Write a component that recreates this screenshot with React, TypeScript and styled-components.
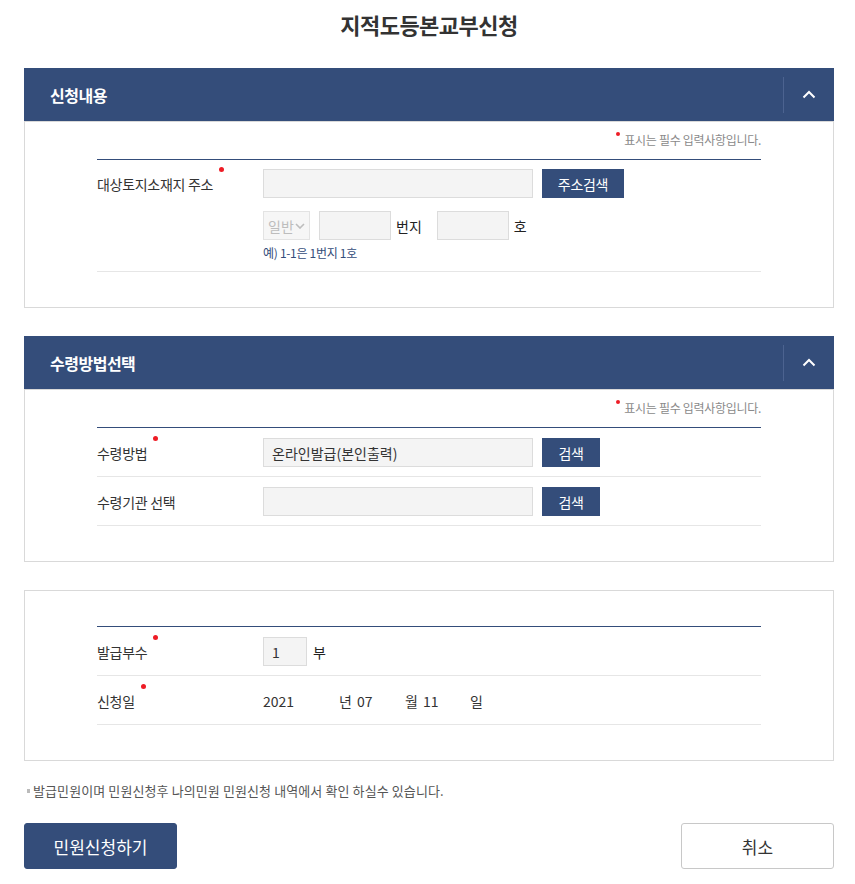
import styled, { createGlobalStyle } from 'styled-components';

const NAVY = '#344d7a';

const GlobalStyle = createGlobalStyle`
  body {
    margin: 0;
    background: #fff;
    font-family: "Noto Sans CJK KR", "Noto Sans", sans-serif;
    color: #333;
  }
`;

const Page = styled.div`
  width: 810px;
  margin-left: 24px;
  padding-bottom: 15px;
`;

const Title = styled.h1`
  margin: 12px 0 0;
  height: 56px;
  font-size: 22px;
  line-height: 24px;
  font-weight: 700;
  text-align: center;
  color: #333;
  letter-spacing: -0.5px;
`;

const Section = styled.section`
  & + & {
    margin-top: 28px;
  }
`;

const SectionHeader = styled.div`
  display: flex;
  align-items: center;
  height: 53px;
  background: ${NAVY};
  padding-left: 26px;
`;

const SectionTitle = styled.h2`
  flex: 1;
  margin: 0;
  font-size: 16px;
  font-weight: 700;
  color: #fff;
  letter-spacing: -0.5px;
`;

const ToggleButton = styled.button`
  display: flex;
  align-items: center;
  justify-content: center;
  width: 51px;
  height: 36px;
  padding: 0;
  border: 0;
  border-left: 1px solid #4c6390;
  background: transparent;
  cursor: pointer;
`;

const SectionBody = styled.div<{ $top: number }>`
  border: 1px solid #d9d9d9;
  padding: ${(p) => p.$top}px 72px 35px;
`;

const RequiredNote = styled.p`
  display: flex;
  justify-content: flex-end;
  align-items: flex-start;
  margin: 0 0 9px;
  height: 20px;
  font-size: 12px;
  line-height: 20px;
  color: #8a8a8a;
  letter-spacing: -0.3px;
`;

const Dot = styled.span<{ $size?: number; $lift?: number }>`
  display: inline-block;
  flex: none;
  width: ${(p) => p.$size ?? 5}px;
  height: ${(p) => p.$size ?? 5}px;
  border-radius: 50%;
  background: #ee1c25;
  margin-top: ${(p) => -(p.$lift ?? 0)}px;
  margin-right: 4px;
`;

const FormTable = styled.div`
  border-top: 1px solid ${NAVY};
`;

const Row = styled.div<{ $top?: number }>`
  display: flex;
  align-items: flex-start;
  padding: ${(p) => p.$top ?? 10}px 0 9px;
  border-bottom: 1px solid #e6e6e6;
`;

const LabelCell = styled.div`
  display: flex;
  align-items: center;
  width: 166px;
  height: 29px;
  flex: none;
`;

const Label = styled.span`
  display: inline-flex;
  align-items: flex-start;
  font-size: 14px;
  line-height: 20px;
  color: #333;
  letter-spacing: -0.3px;

  ${Dot} {
    margin: -7px 0 0 6px;
  }
`;

const FieldCell = styled.div`
  display: flex;
  flex-direction: column;
`;

const FieldLine = styled.div<{ $gap?: number }>`
  display: flex;
  align-items: center;
  gap: ${(p) => p.$gap ?? 9}px;
  & + & {
    margin-top: 13px;
  }
`;

const TextBox = styled.input<{ $w: number }>`
  box-sizing: border-box;
  width: ${(p) => p.$w}px;
  height: 29px;
  padding: 0 8px;
  border: 1px solid #dcdcdc;
  background: #f4f4f4;
  font-family: inherit;
  font-size: 14px;
  color: #333;
  outline: none;
`;

const FakeSelect = styled.div`
  box-sizing: border-box;
  display: flex;
  align-items: center;
  justify-content: space-between;
  width: 47px;
  height: 29px;
  padding: 0 4px;
  border: 1px solid #e3e3e3;
  background: #f6f6f6;
  font-size: 14px;
  color: #bdbdbd;
`;

const SearchButton = styled.button<{ $w: number }>`
  width: ${(p) => p.$w}px;
  height: 29px;
  padding: 0;
  border: 0;
  background: ${NAVY};
  color: #fff;
  font-family: inherit;
  font-size: 14px;
  letter-spacing: -0.3px;
  cursor: pointer;
`;

const Unit = styled.span<{ $ml?: number; $mr?: number }>`
  font-size: 14px;
  color: #222;
  margin-left: ${(p) => p.$ml ?? -4}px;
  margin-right: ${(p) => p.$mr ?? 0}px;
`;

const Example = styled.div`
  margin-top: 4px;
  font-size: 12px;
  line-height: 18px;
  color: ${NAVY};
  letter-spacing: -0.3px;
`;

const DateLine = styled.div`
  display: flex;
  align-items: center;
  height: 29px;
`;

const DateText = styled.span<{ $w: number }>`
  display: inline-block;
  width: ${(p) => p.$w}px;
  font-size: 14px;
  color: #333;
`;

const Footnote = styled.p`
  display: flex;
  align-items: center;
  margin: 21px 0 0 3px;
  font-size: 13px;
  line-height: 18px;
  color: #555;
  letter-spacing: 0.1px;

  &::before {
    content: '';
    width: 3px;
    height: 4px;
    background: #bbb;
    margin-right: 3px;
  }
`;

const ButtonBar = styled.div`
  display: flex;
  justify-content: space-between;
  margin-top: 23px;
`;

const ActionButton = styled.button<{ $primary?: boolean }>`
  width: 153px;
  height: 46px;
  border-radius: 3px;
  border: 1px solid ${(p) => (p.$primary ? NAVY : '#c8c8c8')};
  background: ${(p) => (p.$primary ? NAVY : '#fff')};
  color: ${(p) => (p.$primary ? '#fff' : '#333')};
  font-family: inherit;
  font-size: 17px;
  cursor: pointer;
`;

function ChevronUp() {
  return (
    <svg width="14" height="9" viewBox="0 0 14 9" fill="none">
      <path d="M1.5 7.5L7 2l5.5 5.5" stroke="#fff" strokeWidth="2" />
    </svg>
  );
}

function ChevronDown() {
  return (
    <svg width="10" height="6" viewBox="0 0 10 6" fill="none">
      <path d="M1 1l4 4 4-4" stroke="#bdbdbd" strokeWidth="1.6" />
    </svg>
  );
}

function Note() {
  return (
    <RequiredNote>
      <Dot $size={4} $lift={-2} />
      표시는 필수 입력사항입니다.
    </RequiredNote>
  );
}

function RequiredLabel({ text, required = true }: { text: string; required?: boolean }) {
  return (
    <LabelCell>
      <Label>
        {text}
        {required && <Dot />}
      </Label>
    </LabelCell>
  );
}

function Header({ title }: { title: string }) {
  return (
    <SectionHeader>
      <SectionTitle>{title}</SectionTitle>
      <ToggleButton aria-label="접기">
        <ChevronUp />
      </ToggleButton>
    </SectionHeader>
  );
}

export default function App() {
  return (
    <>
      <GlobalStyle />
      <Page>
        <Title>지적도등본교부신청</Title>

        <Section>
          <Header title="신청내용" />
          <SectionBody $top={8}>
            <Note />
            <FormTable>
              <Row $top={9}>
                <RequiredLabel text="대상토지소재지 주소" />
                <FieldCell>
                  <FieldLine>
                    <TextBox $w={270} readOnly />
                    <SearchButton $w={82}>주소검색</SearchButton>
                  </FieldLine>
                  <FieldLine>
                    <FakeSelect>
                      일반
                      <ChevronDown />
                    </FakeSelect>
                    <TextBox $w={72} />
                    <Unit $mr={6}>번지</Unit>
                    <TextBox $w={72} />
                    <Unit>호</Unit>
                  </FieldLine>
                  <Example>예) 1-1은 1번지 1호</Example>
                </FieldCell>
              </Row>
            </FormTable>
          </SectionBody>
        </Section>

        <Section>
          <Header title="수령방법선택" />
          <SectionBody $top={8}>
            <Note />
            <FormTable>
              <Row>
                <RequiredLabel text="수령방법" />
                <FieldLine>
                  <TextBox $w={270} readOnly value="온라인발급(본인출력)" />
                  <SearchButton $w={58}>검색</SearchButton>
                </FieldLine>
              </Row>
              <Row>
                <RequiredLabel text="수령기관 선택" required={false} />
                <FieldLine>
                  <TextBox $w={270} readOnly />
                  <SearchButton $w={58}>검색</SearchButton>
                </FieldLine>
              </Row>
            </FormTable>
          </SectionBody>
        </Section>

        <Section>
          <SectionBody $top={35}>
            <FormTable>
              <Row>
                <RequiredLabel text="발급부수" />
                <FieldLine $gap={6}>
                  <TextBox $w={44} readOnly value="1" />
                  <Unit $ml={0}>부</Unit>
                </FieldLine>
              </Row>
              <Row>
                <RequiredLabel text="신청일" />
                <DateLine>
                  <DateText $w={76}>2021</DateText>
                  <DateText $w={18}>년</DateText>
                  <DateText $w={48}>07</DateText>
                  <DateText $w={18}>월</DateText>
                  <DateText $w={47}>11</DateText>
                  <DateText $w={14}>일</DateText>
                </DateLine>
              </Row>
            </FormTable>
          </SectionBody>
        </Section>

        <Footnote>발급민원이며 민원신청후 나의민원 민원신청 내역에서 확인 하실수 있습니다.</Footnote>

        <ButtonBar>
          <ActionButton $primary>민원신청하기</ActionButton>
          <ActionButton>취소</ActionButton>
        </ButtonBar>
      </Page>
    </>
  );
}
